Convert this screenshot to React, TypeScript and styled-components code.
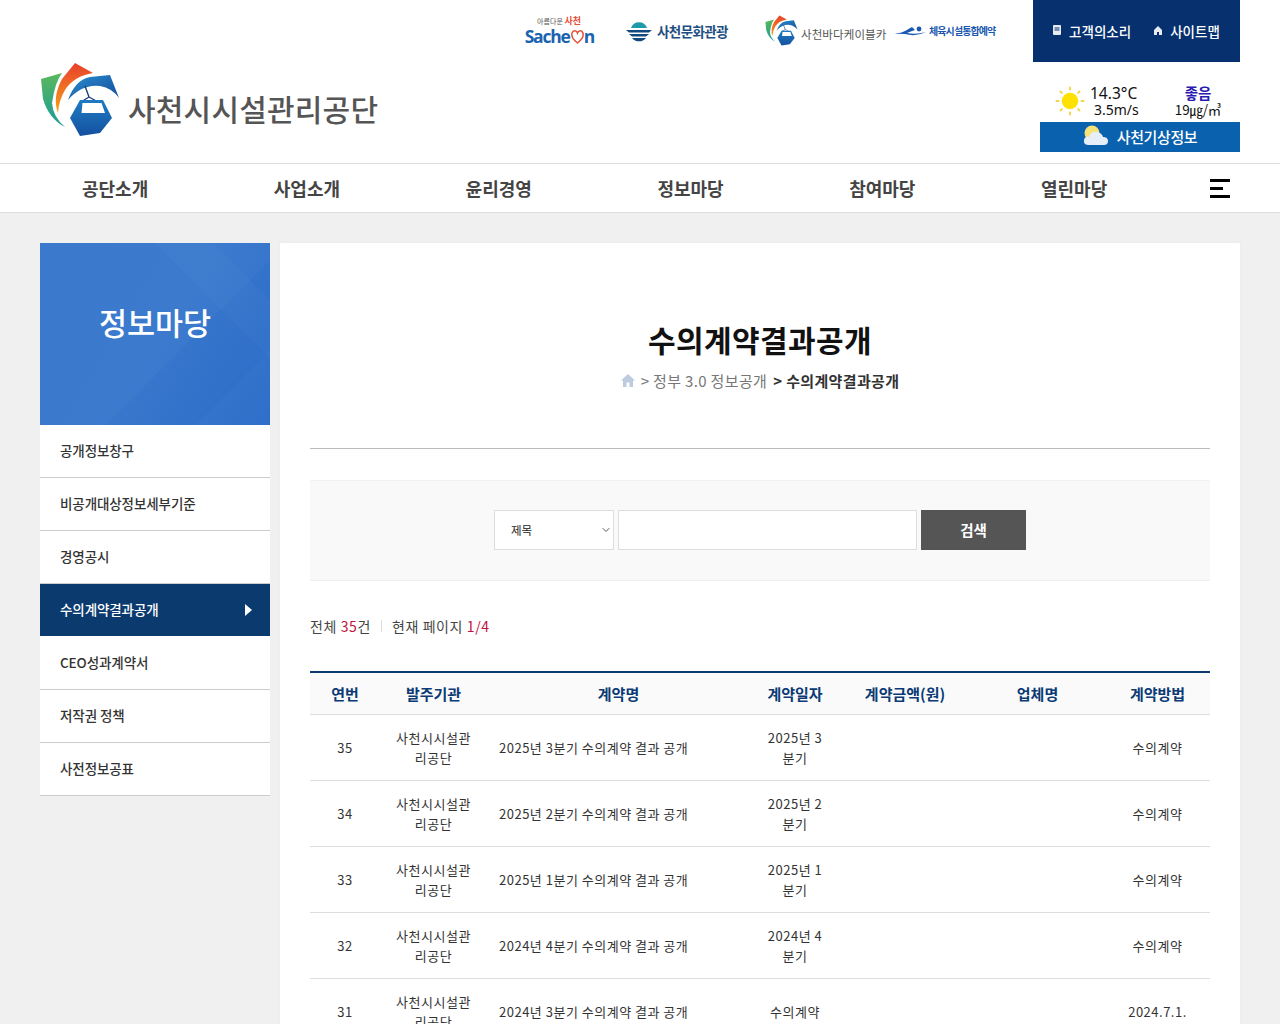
import React from "react";
import styled, { createGlobalStyle } from "styled-components";
import { ChevronDown } from "lucide-react";

const menuItems = [
  "공개정보창구",
  "비공개대상정보세부기준",
  "경영공시",
  "수의계약결과공개",
  "CEO성과계약서",
  "저작권 정책",
  "사전정보공표",
];

const navItems = ["공단소개", "사업소개", "윤리경영", "정보마당", "참여마당", "열린마당"];

const rows = [
  { no: 35, name: "2025년 3분기 수의계약 결과 공개", date: "2025년 3분기", method: "수의계약" },
  { no: 34, name: "2025년 2분기 수의계약 결과 공개", date: "2025년 2분기", method: "수의계약" },
  { no: 33, name: "2025년 1분기 수의계약 결과 공개", date: "2025년 1분기", method: "수의계약" },
  { no: 32, name: "2024년 4분기 수의계약 결과 공개", date: "2024년 4분기", method: "수의계약" },
  { no: 31, name: "2024년 3분기 수의계약 결과 공개", date: "수의계약", method: "2024.7.1." },
];

const MountainLogo: React.FC<{ size: number }> = ({ size }) => (
  <svg width={size} height={size * 0.95} viewBox="0 0 80 76">
    <defs>
      <linearGradient id="logoGreen" x1="0" y1="0" x2="0" y2="1">
        <stop offset="0" stopColor="#5cb85c" />
        <stop offset="1" stopColor="#1a9a9a" />
      </linearGradient>
      <linearGradient id="logoOrange" x1="0" y1="0" x2="0" y2="1">
        <stop offset="0" stopColor="#e8402c" />
        <stop offset="1" stopColor="#f7a11a" />
      </linearGradient>
      <linearGradient id="logoBlue" x1="0" y1="0" x2="1" y2="1">
        <stop offset="0" stopColor="#2a8ed0" />
        <stop offset="1" stopColor="#134a98" />
      </linearGradient>
      <linearGradient id="logoCar" x1="0" y1="0" x2="0" y2="1">
        <stop offset="0" stopColor="#1f7cc4" />
        <stop offset="1" stopColor="#14509f" />
      </linearGradient>
    </defs>
    <path d="M1 17 L22 11 Q15 20 12 41 Q13 55 25 65 Q9 57 3 37 Z" fill="url(#logoGreen)" />
    <path d="M35 1 L53 11 Q34 14 25 28 Q19 38 18 51 Q12 36 22 17 Z" fill="url(#logoOrange)" />
    <path d="M70 13 L79 36 Q72 26 60 24 Q42 22 28 38 Q35 18 50 15 Z" fill="url(#logoBlue)" />
    <path d="M45 24 L49 35 M49 35 L41 40 M49 35 L58 40" stroke="#1d3f7a" strokeWidth="1.4" fill="none" />
    <path d="M40 38 L63 38 L72 56 L60 71 L40 74 L30 56 Z" fill="url(#logoCar)" />
    <path d="M42.5 41 L61.5 41 L65 51 L41.5 51 Z" fill="#fff" />
  </svg>
);

const Sun: React.FC = () => (
  <svg width="30" height="30" viewBox="0 0 30 30">
    <circle cx="15" cy="15" r="8.2" fill="#ffe100" />
    {[0, 45, 90, 135, 180, 225, 270, 315].map((a) => (
      <rect key={a} x="14" y="0.5" width="2" height="4" rx="1" fill="#f5d547" transform={`rotate(${a} 15 15)`} />
    ))}
  </svg>
);

const Cloud: React.FC = () => (
  <svg width="26" height="22" viewBox="0 0 26 22">
    <circle cx="9" cy="8" r="7.5" fill="#f7e27a" />
    <path d="M6 20 Q0 20 1 15 Q2 11 6 12 Q8 6 14 7 Q19 8 20 12 Q25 12 25 16 Q25 20 21 20 Z" fill="#e6eefa" />
  </svg>
);

const App: React.FC = () => {
  return (
    <>
      <GlobalStyle />
      <Header>
        <HeaderInner>
          <TopRow>
            <SachonLink>
              <SachonSlogan>
                아름다운 <b>사천</b>
              </SachonSlogan>
              <SachonWord>
                Sache
                <svg width="13" height="15" viewBox="0 0 13 15">
                  <path d="M6.5 14 C1 10 0.5 6 1 4 C2 1 5.5 1 6.5 4 C7.5 1 11 1 12 4 C12.5 6 12 10 6.5 14 Z" fill="none" stroke="#e8503a" strokeWidth="1.5" />
                </svg>
                n
              </SachonWord>
            </SachonLink>
            <CultureLink>
              <svg width="26" height="24" viewBox="0 0 26 24">
                <path d="M5 9 A8.5 8.5 0 0 1 21 9 Z" fill="#1e9aa8" />
                <path d="M0 11 H26 L23 13.5 H3 Z M3 15 H23 L20 17.5 H6 Z" fill="#12487e" />
                <path d="M6 19 H20 A9 9 0 0 1 6 19 Z" fill="#12487e" />
              </svg>
              사천문화관광
            </CultureLink>
            <CableLink>
              <MountainLogo size={33} />
              <CableText>사천바다케이블카</CableText>
            </CableLink>
            <SportsLink>
              <svg width="34" height="12" viewBox="0 0 34 12">
                <path d="M0 9 Q8 10 13 7 Q18 4 20 3 L23 6 Q17 8 15 9 Q24 11 34 8 Q24 13 13 10 Q6 10 0 9 Z" fill="#1a58b0" />
                <circle cx="27" cy="5" r="2.4" fill="#1a58b0" />
              </svg>
              <SportsText>체육시설통합예약</SportsText>
            </SportsLink>
            <ServiceBox>
              <ServiceLink>
                <svg width="8" height="10" viewBox="0 0 8 10">
                  <rect width="8" height="10" rx="1" fill="#e8ecf2" />
                  <path d="M1.5 3 H6.5 M1.5 5 H6.5" stroke="#06306e" />
                </svg>
                고객의소리
              </ServiceLink>
              <ServiceLink>
                <svg width="8" height="9" viewBox="0 0 8 9">
                  <path d="M4 0 L8 4 V9 H5 V6 H3 V9 H0 V4 Z" fill="#e8ecf2" />
                </svg>
                사이트맵
              </ServiceLink>
            </ServiceBox>
          </TopRow>
          <BrandRow>
            <Brand>
              <MountainLogo size={80} />
              <BrandName>사천시시설관리공단</BrandName>
            </Brand>
            <WeatherBox>
              <WeatherNow>
                <Sun />
                <Temps>
                  <Temp>14.3°C</Temp>
                  <Wind>3.5m/s</Wind>
                </Temps>
                <Dust>
                  <DustLabel>좋음</DustLabel>
                  <DustValue>19㎍/㎥</DustValue>
                </Dust>
              </WeatherNow>
              <WeatherLink>
                <Cloud />
                사천기상정보
              </WeatherLink>
            </WeatherBox>
          </BrandRow>
        </HeaderInner>
      </Header>
      <Nav>
        <NavInner>
          {navItems.map((item) => (
            <NavItem key={item}>{item}</NavItem>
          ))}
          <Burger>
            <span />
            <span />
            <span />
          </Burger>
        </NavInner>
      </Nav>
      <Main>
        <Sidebar>
          <Hero>정보마당</Hero>
          <SideMenu>
            {menuItems.map((item) => (
              <SideItem key={item} $active={item === "수의계약결과공개"}>
                {item}
              </SideItem>
            ))}
          </SideMenu>
        </Sidebar>
        <Content>
          <PageTitle>수의계약결과공개</PageTitle>
          <Crumbs>
            <svg width="14" height="13" viewBox="0 0 14 13">
              <path d="M7 0 L14 6.5 H12 V13 H8.5 V8.5 H5.5 V13 H2 V6.5 H0 Z" fill="#bccbe0" />
            </svg>
            <span>&gt; 정부 3.0 정보공개</span>
            <b>&gt; 수의계약결과공개</b>
          </Crumbs>
          <Rule />
          <SearchBox>
            <SelectWrap>
              <SearchSelect defaultValue="제목">
                <option>제목</option>
                <option>내용</option>
              </SearchSelect>
              <ChevronDown size={12} strokeWidth={1.8} />
            </SelectWrap>
            <SearchInput type="text" />
            <SearchButton>검색</SearchButton>
          </SearchBox>
          <Count>
            <span>
              전체 <em>35</em>건
            </span>
            <CountDivider />
            <span>
              현재 페이지 <em>1/4</em>
            </span>
          </Count>
          <Table>
            <colgroup>
              <col style={{ width: 70 }} />
              <col style={{ width: 107 }} />
              <col style={{ width: 263 }} />
              <col style={{ width: 90 }} />
              <col style={{ width: 130 }} />
              <col style={{ width: 135 }} />
              <col style={{ width: 105 }} />
            </colgroup>
            <thead>
              <tr>
                <th>연번</th>
                <th>발주기관</th>
                <th>계약명</th>
                <th>계약일자</th>
                <th>계약금액(원)</th>
                <th>업체명</th>
                <th>계약방법</th>
              </tr>
            </thead>
            <tbody>
              {rows.map((row) => (
                <tr key={row.no}>
                  <td>{row.no}</td>
                  <td>사천시시설관리공단</td>
                  <NameCell>{row.name}</NameCell>
                  <td>{row.date}</td>
                  <td></td>
                  <td></td>
                  <td>{row.method}</td>
                </tr>
              ))}
            </tbody>
          </Table>
        </Content>
      </Main>
    </>
  );
};

export default App;

const GlobalStyle = createGlobalStyle`
  html, body {
    margin: 0;
    height: 100%;
    overflow: hidden;
    background: #f0f0f0;
    font-family: "Noto Sans CJK KR", "Noto Sans", sans-serif;
  }
  * {
    box-sizing: border-box;
  }
`;

const Header = styled.header`
  background: #fff;
  height: 164px;
  border-bottom: 1px solid #ddd;
`;

const HeaderInner = styled.div`
  width: 1200px;
  margin: 0 auto;
`;

const TopRow = styled.div`
  display: flex;
  justify-content: flex-end;
  align-items: center;
  height: 62px;
`;

const SachonLink = styled.a`
  display: flex;
  flex-direction: column;
  align-items: flex-end;
  width: 70px;
  margin-right: 32px;
`;

const SachonSlogan = styled.span`
  font-size: 7px;
  line-height: 9px;
  color: #555;
  margin-right: 13px;
  b {
    color: #e8503a;
    font-size: 9px;
  }
`;

const SachonWord = styled.span`
  display: flex;
  align-items: center;
  font-family: "Open Sans", sans-serif;
  font-weight: 700;
  font-size: 17.5px;
  line-height: 20px;
  letter-spacing: -1.2px;
  color: #1a63b0;
  svg {
    margin: 1px 0 0 1px;
  }
`;

const CultureLink = styled.a`
  display: flex;
  align-items: center;
  gap: 5px;
  width: 102px;
  margin-right: 37px;
  font-size: 13.5px;
  font-weight: 700;
  letter-spacing: -0.6px;
  color: #1f4f82;
  white-space: nowrap;
`;

const CableLink = styled.a`
  display: flex;
  align-items: center;
  gap: 3px;
  width: 127px;
`;

const CableText = styled.span`
  font-size: 11.5px;
  letter-spacing: 0.1px;
  line-height: 16px;
  margin-top: 5px;
  color: #555;
  white-space: nowrap;
`;

const SportsLink = styled.a`
  display: flex;
  align-items: center;
  gap: 3px;
  width: 141px;
  padding-bottom: 2px;
`;

const SportsText = styled.span`
  font-size: 10px;
  font-weight: 700;
  letter-spacing: -0.9px;
  color: #1a58b0;
  white-space: nowrap;
`;

const ServiceBox = styled.div`
  display: flex;
  align-items: center;
  justify-content: center;
  gap: 23px;
  width: 207px;
  height: 62px;
  background: #06306e;
`;

const ServiceLink = styled.a`
  display: flex;
  align-items: center;
  gap: 8px;
  font-size: 13.5px;
  font-weight: 500;
  color: #fff;
  svg {
    margin-top: -2px;
  }
`;

const BrandRow = styled.div`
  display: flex;
  justify-content: space-between;
`;

const Brand = styled.a`
  display: flex;
  align-items: center;
  gap: 8px;
  height: 76px;
`;

const BrandName = styled.span`
  font-size: 30px;
  font-weight: 500;
  letter-spacing: 0.2px;
  color: #555;
  margin-top: 16px;
  white-space: nowrap;
`;

const WeatherBox = styled.div`
  width: 200px;
  margin-top: 22px;
`;

const WeatherNow = styled.div`
  display: flex;
  align-items: center;
  height: 38px;
  padding: 0 0 4px 15px;
`;

const Temps = styled.div`
  width: 60px;
  margin: 1px 0 0 5px;
`;

const Temp = styled.div`
  font-family: "Noto Sans", sans-serif;
  font-size: 15.5px;
  line-height: 17px;
  color: #111;
`;

const Wind = styled.div`
  font-family: "Noto Sans", sans-serif;
  font-size: 14px;
  line-height: 16px;
  color: #111;
  padding-left: 4px;
`;

const Dust = styled.div`
  width: 70px;
  margin: -2px 0 0 13px;
  text-align: center;
`;

const DustLabel = styled.div`
  font-size: 14.5px;
  font-weight: 700;
  line-height: 17px;
  color: #2a1bb0;
`;

const DustValue = styled.div`
  font-size: 13.5px;
  line-height: 16px;
  letter-spacing: -0.2px;
  color: #111;
  white-space: nowrap;
`;

const WeatherLink = styled.a`
  display: flex;
  align-items: center;
  justify-content: center;
  gap: 8px;
  height: 30px;
  padding-bottom: 2px;
  background: #0a62ae;
  color: #fff;
  font-size: 15px;
  font-weight: 500;
  letter-spacing: -0.4px;
`;

const Nav = styled.nav`
  background: #fff;
  height: 49px;
  border-bottom: 1px solid #ddd;
`;

const NavInner = styled.div`
  display: flex;
  align-items: center;
  width: 1200px;
  height: 48px;
  margin: 0 auto;
`;

const NavItem = styled.a`
  width: 191.8px;
  padding-left: 42px;
  font-size: 18px;
  font-weight: 700;
  color: #444;
  white-space: nowrap;
`;

const Burger = styled.button`
  display: flex;
  flex-direction: column;
  align-items: flex-start;
  gap: 5px;
  width: 20px;
  margin-left: auto;
  margin-right: 10px;
  padding: 0;
  border: 0;
  background: none;
  span {
    display: block;
    height: 3px;
    background: #000;
    width: 20px;
  }
  span:nth-child(2) {
    width: 13px;
  }
`;

const Main = styled.main`
  display: flex;
  align-items: flex-start;
  gap: 10px;
  width: 1200px;
  margin: 30px auto 0;
`;

const Sidebar = styled.aside`
  width: 230px;
  flex: none;
`;

const Hero = styled.div`
  height: 182px;
  padding-top: 57px;
  text-align: center;
  font-size: 30.5px;
  font-weight: 500;
  line-height: 44px;
  color: #fff;
  background:
    linear-gradient(45deg, transparent 72%, rgba(255, 255, 255, 0.02) 72%, rgba(255, 255, 255, 0.02) 86%, transparent 86%),
    linear-gradient(135deg, transparent 60%, rgba(30, 95, 195, 0.14) 60%, rgba(30, 95, 195, 0.14) 82%, transparent 82%),
    linear-gradient(120deg, #3a79cc 0%, #3b7acd 55%, #2f6fca 100%);
`;

const SideMenu = styled.ul`
  margin: 0;
  padding: 0;
  list-style: none;
`;

const SideItem = styled.li<{ $active?: boolean }>`
  position: relative;
  display: flex;
  align-items: center;
  height: 53px;
  padding: 0 0 2px 20px;
  font-size: 13.5px;
  font-weight: 500;
  letter-spacing: -0.1px;
  color: ${(p) => (p.$active ? "#fff" : "#333")};
  background: ${(p) => (p.$active ? "#0b3a6f" : "#fff")};
  border-bottom: 1px solid ${(p) => (p.$active ? "#fff" : "#ccc")};
  &::after {
    content: "";
    display: ${(p) => (p.$active ? "block" : "none")};
    position: absolute;
    right: 18px;
    top: 20px;
    border-left: 7px solid #fff;
    border-top: 6px solid transparent;
    border-bottom: 6px solid transparent;
  }
`;

const Content = styled.section`
  flex: 1;
  height: 900px;
  padding: 0 30px;
  background: #fff;
  box-shadow: 0 0 4px rgba(0, 0, 0, 0.03);
`;

const PageTitle = styled.h2`
  margin: 0;
  padding-top: 74px;
  font-size: 30px;
  font-weight: 700;
  letter-spacing: 0.4px;
  line-height: 44px;
  text-align: center;
  color: #111;
`;

const Crumbs = styled.div`
  display: flex;
  align-items: center;
  justify-content: center;
  gap: 6px;
  height: 24px;
  margin-top: 7px;
  font-size: 15px;
  letter-spacing: 0.35px;
  color: #777;
  b {
    color: #333;
    font-weight: 700;
  }
`;

const Rule = styled.hr`
  margin: 56px 0 0;
  border: 0;
  border-top: 1px solid #bbb;
`;

const SearchBox = styled.form`
  display: flex;
  align-items: center;
  justify-content: center;
  gap: 4px;
  height: 101px;
  margin-top: 31px;
  padding-bottom: 2px;
  background: #f9f9f9;
  border-top: 1px solid #f2f2f2;
  border-bottom: 1px solid #eee;
`;

const SelectWrap = styled.div`
  position: relative;
  width: 120px;
  height: 40px;
  svg {
    position: absolute;
    right: 2px;
    top: 14px;
    color: #444;
    pointer-events: none;
  }
`;

const SearchSelect = styled.select`
  appearance: none;
  width: 100%;
  height: 100%;
  padding-left: 16px;
  font-family: inherit;
  font-size: 11.5px;
  color: #222;
  background: #fff;
  border: 1px solid #ddd;
  border-radius: 0;
`;

const SearchInput = styled.input`
  width: 299px;
  height: 40px;
  background: #fff;
  border: 1px solid #ddd;
`;

const SearchButton = styled.button`
  width: 105px;
  height: 40px;
  padding: 0;
  font-family: inherit;
  font-size: 14.5px;
  font-weight: 700;
  color: #fff;
  background: #555;
  border: 0;
`;

const Count = styled.div`
  display: flex;
  align-items: center;
  gap: 10px;
  margin-top: 34px;
  height: 22px;
  font-size: 14px;
  letter-spacing: 0.6px;
  color: #444;
  em {
    font-style: normal;
    color: #c0143c;
  }
`;

const CountDivider = styled.i`
  width: 1px;
  height: 12px;
  background: #ddd;
`;

const Table = styled.table`
  width: 900px;
  margin-top: 34px;
  border-collapse: collapse;
  table-layout: fixed;
  border-top: 2px solid #0b3a6f;
  th {
    height: 42px;
    padding: 0;
    font-size: 15px;
    font-weight: 700;
    color: #0b3a75;
    background: #fafafa;
    border-bottom: 1px solid #ddd;
  }
  td {
    height: 66px;
    padding: 2px 12px 0;
    font-size: 13px;
    letter-spacing: 0.5px;
    line-height: 20px;
    color: #333;
    text-align: center;
    word-break: break-all;
    border-bottom: 1px solid #ddd;
  }
`;

const NameCell = styled.td`
  && {
    text-align: left;
  }
`;
